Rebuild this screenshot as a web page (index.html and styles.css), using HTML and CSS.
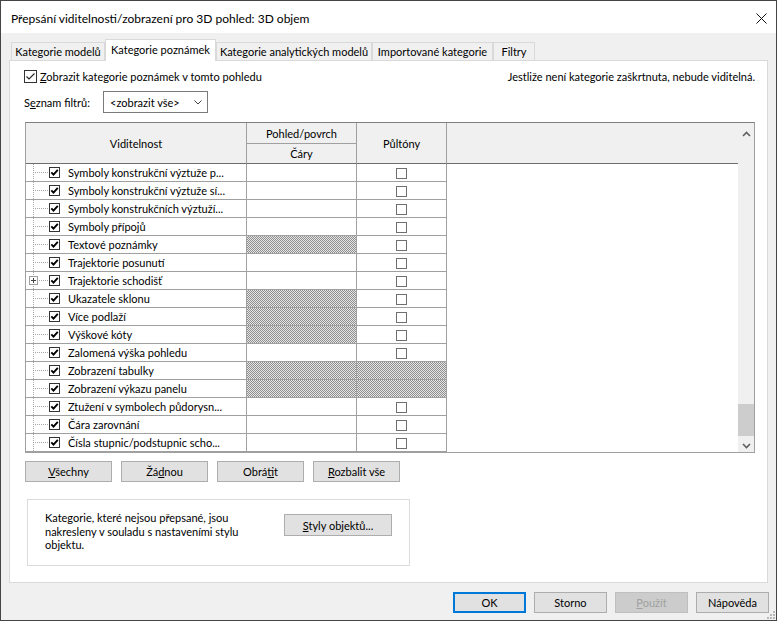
FILE: index.html
```html
<!DOCTYPE html>
<html lang="cs">
<head>
<meta charset="utf-8">
<title>Přepsání viditelnosti/zobrazení</title>
<link rel="stylesheet" href="styles.css">
</head>
<body>
<div class="dialog">
  <div class="titlebar">
    <span class="title">Přepsání viditelnosti/zobrazení pro 3D pohled: 3D objem</span>
    <svg class="close" width="11" height="11" viewBox="0 0 11 11"><path d="M0.5 0.5L10.5 10.5M10.5 0.5L0.5 10.5" stroke="#111" stroke-width="1" fill="none"/></svg>
  </div>
  <div class="tabs">
    <div class="tab t1">Kategorie modelů</div>
    <div class="tab active t2">Kategorie poznámek</div>
    <div class="tab t3">Kategorie analytických modelů</div>
    <div class="tab t4">Importované kategorie</div>
    <div class="tab t5">Filtry</div>
  </div>
  <div class="panel">
    <div class="top-row">
      <div class="chk">
        <svg class="chk-box" width="13" height="13" viewBox="0 0 13 13"><rect x="0.5" y="0.5" width="12" height="12" fill="#fff" stroke="#333"/><path d="M2.5 6.5L5 9L10.5 3.5" stroke="#222" stroke-width="1.1" fill="none"/></svg>
        <span><u>Z</u>obrazit kategorie poznámek v tomto pohledu</span>
      </div>
      <span class="hint">Jestliže není kategorie zaškrtnuta, nebude viditelná.</span>
    </div>
    <div class="filter-row">
      <span class="filter-label">S<u>e</u>znam filtrů:</span>
      <div class="select">
        <span>&lt;zobrazit vše&gt;</span>
        <svg width="8" height="5" viewBox="0 0 8 5"><path d="M0.5 0.5L4 4L7.5 0.5" stroke="#444" fill="none"/></svg>
      </div>
    </div>

    <div class="grid">
      <div class="grid-main">
        <div class="head">
          <div class="h-vis">Viditelnost</div>
          <div class="h-view">Pohled/povrch</div>
          <div class="h-half">Půltóny</div>
          <div class="h-rest"></div>
          <div class="h-lines">Čáry</div>
        </div>
        <div class="rows">
          <div class="row"><div class="c-name"><span class="tree"></span><svg class="cb" viewBox="0 0 11 11"><rect x="0.5" y="0.5" width="10" height="10" fill="#fff" stroke="#333"/><path d="M2.3 5.3L4.5 7.6L8.8 2.8" stroke="#000" stroke-width="1.9" fill="none"/></svg><span class="name">Symboly konstrukční výztuže p...</span></div><div class="c-line"></div><div class="c-half"><span class="hb"></span></div><div class="c-rest"></div></div>
          <div class="row"><div class="c-name"><span class="tree"></span><svg class="cb" viewBox="0 0 11 11"><rect x="0.5" y="0.5" width="10" height="10" fill="#fff" stroke="#333"/><path d="M2.3 5.3L4.5 7.6L8.8 2.8" stroke="#000" stroke-width="1.9" fill="none"/></svg><span class="name">Symboly konstrukční výztuže sí...</span></div><div class="c-line"></div><div class="c-half"><span class="hb"></span></div><div class="c-rest"></div></div>
          <div class="row"><div class="c-name"><span class="tree"></span><svg class="cb" viewBox="0 0 11 11"><rect x="0.5" y="0.5" width="10" height="10" fill="#fff" stroke="#333"/><path d="M2.3 5.3L4.5 7.6L8.8 2.8" stroke="#000" stroke-width="1.9" fill="none"/></svg><span class="name">Symboly konstrukčních výztuží...</span></div><div class="c-line"></div><div class="c-half"><span class="hb"></span></div><div class="c-rest"></div></div>
          <div class="row"><div class="c-name"><span class="tree"></span><svg class="cb" viewBox="0 0 11 11"><rect x="0.5" y="0.5" width="10" height="10" fill="#fff" stroke="#333"/><path d="M2.3 5.3L4.5 7.6L8.8 2.8" stroke="#000" stroke-width="1.9" fill="none"/></svg><span class="name">Symboly přípojů</span></div><div class="c-line"></div><div class="c-half"><span class="hb"></span></div><div class="c-rest"></div></div>
          <div class="row"><div class="c-name"><span class="tree"></span><svg class="cb" viewBox="0 0 11 11"><rect x="0.5" y="0.5" width="10" height="10" fill="#fff" stroke="#333"/><path d="M2.3 5.3L4.5 7.6L8.8 2.8" stroke="#000" stroke-width="1.9" fill="none"/></svg><span class="name">Textové poznámky</span></div><div class="c-line hatch"></div><div class="c-half"><span class="hb"></span></div><div class="c-rest"></div></div>
          <div class="row"><div class="c-name"><span class="tree"></span><svg class="cb" viewBox="0 0 11 11"><rect x="0.5" y="0.5" width="10" height="10" fill="#fff" stroke="#333"/><path d="M2.3 5.3L4.5 7.6L8.8 2.8" stroke="#000" stroke-width="1.9" fill="none"/></svg><span class="name">Trajektorie posunutí</span></div><div class="c-line"></div><div class="c-half"><span class="hb"></span></div><div class="c-rest"></div></div>
          <div class="row"><div class="c-name"><span class="tree"><svg class="plus" width="9" height="9" viewBox="0 0 9 9"><rect x="0.5" y="0.5" width="8" height="8" fill="#fff" stroke="#a0a0a0"/><path d="M2 4.5H7M4.5 2V7" stroke="#444" fill="none"/></svg></span><svg class="cb" viewBox="0 0 11 11"><rect x="0.5" y="0.5" width="10" height="10" fill="#fff" stroke="#333"/><path d="M2.3 5.3L4.5 7.6L8.8 2.8" stroke="#000" stroke-width="1.9" fill="none"/></svg><span class="name">Trajektorie schodišť</span></div><div class="c-line"></div><div class="c-half"><span class="hb"></span></div><div class="c-rest"></div></div>
          <div class="row"><div class="c-name"><span class="tree"></span><svg class="cb" viewBox="0 0 11 11"><rect x="0.5" y="0.5" width="10" height="10" fill="#fff" stroke="#333"/><path d="M2.3 5.3L4.5 7.6L8.8 2.8" stroke="#000" stroke-width="1.9" fill="none"/></svg><span class="name">Ukazatele sklonu</span></div><div class="c-line hatch"></div><div class="c-half"><span class="hb"></span></div><div class="c-rest"></div></div>
          <div class="row"><div class="c-name"><span class="tree"></span><svg class="cb" viewBox="0 0 11 11"><rect x="0.5" y="0.5" width="10" height="10" fill="#fff" stroke="#333"/><path d="M2.3 5.3L4.5 7.6L8.8 2.8" stroke="#000" stroke-width="1.9" fill="none"/></svg><span class="name">Více podlaží</span></div><div class="c-line hatch"></div><div class="c-half"><span class="hb"></span></div><div class="c-rest"></div></div>
          <div class="row"><div class="c-name"><span class="tree"></span><svg class="cb" viewBox="0 0 11 11"><rect x="0.5" y="0.5" width="10" height="10" fill="#fff" stroke="#333"/><path d="M2.3 5.3L4.5 7.6L8.8 2.8" stroke="#000" stroke-width="1.9" fill="none"/></svg><span class="name">Výškové kóty</span></div><div class="c-line hatch"></div><div class="c-half"><span class="hb"></span></div><div class="c-rest"></div></div>
          <div class="row"><div class="c-name"><span class="tree"></span><svg class="cb" viewBox="0 0 11 11"><rect x="0.5" y="0.5" width="10" height="10" fill="#fff" stroke="#333"/><path d="M2.3 5.3L4.5 7.6L8.8 2.8" stroke="#000" stroke-width="1.9" fill="none"/></svg><span class="name">Zalomená výška pohledu</span></div><div class="c-line"></div><div class="c-half"><span class="hb"></span></div><div class="c-rest"></div></div>
          <div class="row"><div class="c-name"><span class="tree"></span><svg class="cb" viewBox="0 0 11 11"><rect x="0.5" y="0.5" width="10" height="10" fill="#fff" stroke="#333"/><path d="M2.3 5.3L4.5 7.6L8.8 2.8" stroke="#000" stroke-width="1.9" fill="none"/></svg><span class="name">Zobrazení tabulky</span></div><div class="c-line hatch"></div><div class="c-half hatch"></div><div class="c-rest"></div></div>
          <div class="row"><div class="c-name"><span class="tree"></span><svg class="cb" viewBox="0 0 11 11"><rect x="0.5" y="0.5" width="10" height="10" fill="#fff" stroke="#333"/><path d="M2.3 5.3L4.5 7.6L8.8 2.8" stroke="#000" stroke-width="1.9" fill="none"/></svg><span class="name">Zobrazení výkazu panelu</span></div><div class="c-line hatch"></div><div class="c-half hatch"></div><div class="c-rest"></div></div>
          <div class="row"><div class="c-name"><span class="tree"></span><svg class="cb" viewBox="0 0 11 11"><rect x="0.5" y="0.5" width="10" height="10" fill="#fff" stroke="#333"/><path d="M2.3 5.3L4.5 7.6L8.8 2.8" stroke="#000" stroke-width="1.9" fill="none"/></svg><span class="name">Ztužení v symbolech půdorysn...</span></div><div class="c-line"></div><div class="c-half"><span class="hb"></span></div><div class="c-rest"></div></div>
          <div class="row"><div class="c-name"><span class="tree"></span><svg class="cb" viewBox="0 0 11 11"><rect x="0.5" y="0.5" width="10" height="10" fill="#fff" stroke="#333"/><path d="M2.3 5.3L4.5 7.6L8.8 2.8" stroke="#000" stroke-width="1.9" fill="none"/></svg><span class="name">Čára zarovnání</span></div><div class="c-line"></div><div class="c-half"><span class="hb"></span></div><div class="c-rest"></div></div>
          <div class="row"><div class="c-name"><span class="tree"></span><svg class="cb" viewBox="0 0 11 11"><rect x="0.5" y="0.5" width="10" height="10" fill="#fff" stroke="#333"/><path d="M2.3 5.3L4.5 7.6L8.8 2.8" stroke="#000" stroke-width="1.9" fill="none"/></svg><span class="name">Čísla stupnic/podstupnic scho...</span></div><div class="c-line"></div><div class="c-half"><span class="hb"></span></div><div class="c-rest"></div></div>
        </div>
      </div>
      <div class="vscroll">
        <svg class="arrow-up" width="9" height="6" viewBox="0 0 9 6"><path d="M1 5L4.5 1.5L8 5" stroke="#606060" stroke-width="1.6" fill="none"/></svg>
        <div class="track"><div class="thumb"></div></div>
        <svg class="arrow-down" width="9" height="6" viewBox="0 0 9 6"><path d="M1 1L4.5 4.5L8 1" stroke="#606060" stroke-width="1.6" fill="none"/></svg>
      </div>
    </div>

    <div class="btn-row">
      <div class="btn"><span><u>V</u>šechny</span></div>
      <div class="btn"><span>Žá<u>d</u>nou</span></div>
      <div class="btn"><span>Obrá<u>t</u>it</span></div>
      <div class="btn"><span><u>R</u>ozbalit vše</span></div>
    </div>

    <div class="group">
      <div class="group-text">Kategorie, které nejsou přepsané, jsou<br>nakresleny v souladu s nastaveními stylu<br>objektu.</div>
      <div class="btn btn-styles"><span><u>S</u>tyly objektů...</span></div>
    </div>
  </div>
  <div class="footer">
    <div class="btn fbtn default">OK</div>
    <div class="btn fbtn">Storno</div>
    <div class="btn fbtn disabled"><span><u>P</u>oužít</span></div>
    <div class="btn fbtn">Nápověda</div>
    <svg class="grip" width="9" height="9" viewBox="0 0 9 9"><g fill="#b8b8b8"><rect x="7" y="1" width="2" height="2"/><rect x="4" y="4" width="2" height="2"/><rect x="7" y="4" width="2" height="2"/><rect x="1" y="7" width="2" height="2"/><rect x="4" y="7" width="2" height="2"/><rect x="7" y="7" width="2" height="2"/></g></svg>
  </div>
</div>
</body>
</html>
```

FILE: styles.css
```css
* { box-sizing: border-box; }

body {
  margin: 0;
  background: #ffffff;
  font-family: Lato, "Liberation Sans", sans-serif;
  font-size: 11px;
  color: #000;
}

u { text-decoration: underline; text-underline-offset: 1px; }

.dialog {
  width: 777px;
  height: 621px;
  border: 1px solid #454545;
  background: #f0f0f0;
  display: flex;
  flex-direction: column;
}

.titlebar {
  height: 32px;
  flex: none;
  background: #fff;
  display: flex;
  align-items: center;
  justify-content: space-between;
  padding: 2px 9px 0 10px;
  font-size: 12px;
}

.close { display: block; }

.tabs {
  height: 27px;
  flex: none;
  display: flex;
  align-items: flex-end;
  padding-left: 10px;
}

.tab {
  height: 18px;
  border: 1px solid #d9d9d9;
  border-bottom: none;
  background: #f0f0f0;
  display: flex;
  align-items: center;
  justify-content: center;
  white-space: nowrap;
}

.tab.active {
  height: 22px;
  margin-bottom: -1px;
  background: #fff;
  position: relative;
  z-index: 1;
  padding-bottom: 3px;
}

.t1 { width: 94px; }
.t2 { width: 111px; }
.t3 { width: 156px; }
.t4 { width: 121px; }
.t5 { width: 42px; }

.panel {
  margin-left: 8px;
  width: 759px;
  height: 523px;
  flex: none;
  border: 1px solid #d9d9d9;
  background: #fff;
  display: flex;
  flex-direction: column;
}

.top-row {
  display: flex;
  justify-content: space-between;
  align-items: center;
  height: 15px;
  margin-top: 8px;
  padding: 0 12px 0 14px;
}

.chk {
  display: flex;
  align-items: center;
  gap: 3px;
}

.chk-box { display: block; }

.filter-row {
  display: flex;
  align-items: center;
  height: 22px;
  margin-top: 7px;
  padding-left: 14px;
}

.filter-label { width: 79px; }

.select {
  width: 105px;
  height: 22px;
  border: 1px solid #7a7a7a;
  display: flex;
  align-items: center;
  justify-content: space-between;
  padding: 0 5px 0 6px;
}

.select svg { display: block; }

/* table */
.grid {
  margin: 9px 0 0 15px;
  width: 730px;
  height: 331px;
  border: 1px solid #a0a0a0;
  border-top-color: #7f7f7f;
  display: flex;
}

.grid-main {
  width: 712px;
  display: flex;
  flex-direction: column;
}

.head {
  display: grid;
  grid-template-columns: 221px 110px 90px 1fr;
  grid-template-rows: 21px 20px;
  background: #f0f0f0;
}

.head > div {
  display: flex;
  align-items: center;
  justify-content: center;
}

.h-vis {
  grid-row: 1 / 3;
  grid-column: 1;
  border-right: 1px solid #a0a0a0;
  border-bottom: 1px solid #6e6e6e;
}

.h-view {
  grid-row: 1;
  grid-column: 2;
  border-right: 1px solid #a0a0a0;
  border-bottom: 1px solid #a0a0a0;
}

.h-lines {
  grid-row: 2;
  grid-column: 2;
  border-right: 1px solid #a0a0a0;
  border-bottom: 1px solid #6e6e6e;
}

.h-half {
  grid-row: 1 / 3;
  grid-column: 3;
  border-right: 1px solid #a0a0a0;
  border-bottom: 1px solid #6e6e6e;
}

.h-rest {
  grid-row: 1 / 3;
  grid-column: 4;
  border-bottom: 1px solid #6e6e6e;
}

.rows {
  display: flex;
  flex-direction: column;
  background: #fff;
}

.row {
  display: flex;
  height: 18px;
}

.c-name {
  width: 221px;
  border-right: 1px solid #a0a0a0;
  border-bottom: 1px solid #a0a0a0;
  display: flex;
  align-items: center;
  overflow: hidden;
  white-space: nowrap;
}

.tree {
  width: 23px;
  align-self: stretch;
  flex: none;
  display: flex;
  align-items: center;
  padding-left: 3px;
  background:
    repeating-linear-gradient(to bottom, #a8a8a8 0 1px, transparent 1px 2px) 7px 0 / 1px 100% no-repeat,
    repeating-linear-gradient(to right, #a8a8a8 0 1px, transparent 1px 2px) 9px 8px / 13px 1px no-repeat;
}

.plus { display: block; }

.cb {
  width: 11px;
  height: 11px;
  flex: none;
  display: block;
}

.name {
  margin-left: 8px;
}

.c-line {
  width: 110px;
  border-right: 1px solid #a0a0a0;
  border-bottom: 1px solid #a0a0a0;
}

.c-half {
  width: 90px;
  border-right: 1px solid #a0a0a0;
  border-bottom: 1px solid #a0a0a0;
  display: flex;
  align-items: center;
  justify-content: center;
  padding-top: 1px;
}

.c-rest { flex: 1; }

.hatch {
  background: repeating-conic-gradient(#8e8e8e 0% 25%, #e6e6e6 0% 50%) 0 0 / 2px 2px;
}

.hb {
  width: 11px;
  height: 11px;
  border: 1px solid #6f6f6f;
  background: #fff;
}

.vscroll {
  width: 16px;
  background: #f0f0f0;
  display: flex;
  flex-direction: column;
  align-items: center;
}

.arrow-up { margin-top: 8px; display: block; }
.arrow-down { margin-bottom: 3px; display: block; }

.track {
  flex: 1;
  width: 100%;
  display: flex;
  flex-direction: column;
  justify-content: flex-end;
  padding-bottom: 7px;
}

.thumb {
  height: 32px;
  background: #cdcdcd;
}

/* buttons */
.btn-row {
  display: flex;
  gap: 9px;
  margin: 8px 0 0 15px;
}

.btn {
  width: 87px;
  height: 21px;
  background: #e1e1e1;
  border: 1px solid #adadad;
  display: flex;
  align-items: center;
  justify-content: center;
  white-space: nowrap;
}

.group {
  margin: 17px 0 0 17px;
  width: 383px;
  height: 67px;
  border: 1px solid #dcdcdc;
  display: flex;
  align-items: flex-start;
  padding: 11px 17px 0 17px;
}

.group-text {
  width: 222px;
  line-height: 13.5px;
  white-space: nowrap;
}

.btn-styles {
  width: 108px;
  height: 22px;
  margin: 3px 0 0 17px;
}

.footer {
  flex: 1;
  display: flex;
  justify-content: flex-end;
  align-items: flex-start;
  gap: 8px;
  padding: 9px 7px 0 0;
  position: relative;
}

.grip {
  position: absolute;
  right: 1px;
  bottom: 1px;
  display: block;
}

.fbtn { width: 73px; }

.fbtn.default {
  border-color: #0078d7;
  box-shadow: inset 0 0 0 1px #0078d7;
}

.fbtn.disabled {
  background: #cccccc;
  border-color: #bfbfbf;
  color: #a0a0a0;
}
```
